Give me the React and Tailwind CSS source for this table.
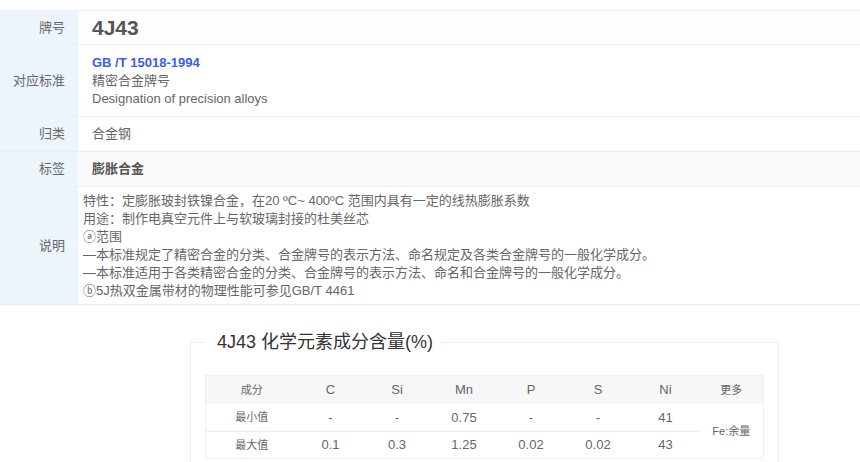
export default function App() {
  const font = { fontFamily: '"Liberation Sans", "Noto Sans CJK SC", sans-serif' };
  const cols = [92, 66, 67, 67, 67, 67, 68, 64];
  return (
    <div className="w-[860px] h-[462px] overflow-hidden bg-white text-[13px] text-[#666]" style={font}>
      <div className="mt-[10px] border-t border-[#eee]">
        <div className="flex h-[34px] border-b border-[#eee]">
          <div className="w-[78px] shrink-0 bg-[#edf5fc] flex items-center justify-end pr-[13px]">牌号</div>
          <div className="flex-1 flex items-center pl-[14px] bg-[#fefefe] text-[21px] font-bold text-[#555]">4J43</div>
        </div>
        <div className="flex h-[72px] border-b border-[#eee]">
          <div className="w-[78px] shrink-0 bg-[#edf5fc] flex items-center justify-end pr-[13px]">对应标准</div>
          <div className="flex-1 flex flex-col justify-center pl-[14px] leading-[18px]">
            <div className="font-bold text-[#3a5cf0]">GB /T 15018-1994</div>
            <div>精密合金牌号</div>
            <div>Designation of precision alloys</div>
          </div>
        </div>
        <div className="flex h-[35px] border-b border-[#eee]">
          <div className="w-[78px] shrink-0 bg-[#edf5fc] flex items-center justify-end pr-[13px]">归类</div>
          <div className="flex-1 flex items-center pl-[14px]">合金钢</div>
        </div>
        <div className="flex h-[35px] border-b border-[#eee]">
          <div className="w-[78px] shrink-0 bg-[#edf5fc] flex items-center justify-end pr-[13px]">标签</div>
          <div className="flex-1 flex items-center pl-[14px] bg-[#fafafa] font-bold text-[#555]">膨胀合金</div>
        </div>
        <div className="flex h-[118px] border-b border-[#eee]">
          <div className="w-[78px] shrink-0 bg-[#edf5fc] flex items-center justify-end pr-[13px]">说明</div>
          <div className="flex-1 flex flex-col justify-center pl-[5px] leading-[18px]">
            <div>特性：定膨胀玻封铁镍合金，在20 ºC~ 400ºC 范围内具有一定的线热膨胀系数</div>
            <div>用途：制作电真空元件上与软玻璃封接的杜美丝芯</div>
            <div>ⓐ范围</div>
            <div>—本标准规定了精密合金的分类、合金牌号的表示方法、命名规定及各类合金牌号的一般化学成分。</div>
            <div>—本标准适用于各类精密合金的分类、合金牌号的表示方法、命名和合金牌号的一般化学成分。</div>
            <div>ⓑ5J热双金属带材的物理性能可参见GB/T 4461</div>
          </div>
        </div>
      </div>
      <fieldset className="ml-[190px] mt-[25px] w-[588px] border border-[#eee] px-[14px] pt-[21px] pb-[20px]">
        <legend className="ml-0 pl-3 pr-2 text-[18px] leading-[24px] text-[#333]">4J43 化学元素成分含量(%)</legend>
        <table className="w-[558px] table-fixed border-collapse text-center border border-[#f0f0f0]">
          <colgroup>
            {cols.map((w, i) => (
              <col key={i} style={{ width: w }} />
            ))}
          </colgroup>
          <thead>
            <tr className="h-[28px] bg-[#f7f7f7]">
              <th className="font-normal text-[11px]">成分</th>
              <th className="font-normal">C</th>
              <th className="font-normal">Si</th>
              <th className="font-normal">Mn</th>
              <th className="font-normal">P</th>
              <th className="font-normal">S</th>
              <th className="font-normal">Ni</th>
              <th className="font-normal text-[11px]">更多</th>
            </tr>
          </thead>
          <tbody>
            <tr className="h-[28px] border-b border-[#eee]">
              <td className="text-[11px]">最小值</td>
              <td>-</td>
              <td>-</td>
              <td>0.75</td>
              <td>-</td>
              <td>-</td>
              <td>41</td>
              <td rowSpan={2} className="text-[11px] bg-white">Fe:余量</td>
            </tr>
            <tr className="h-[27px]">
              <td className="text-[11px]">最大值</td>
              <td>0.1</td>
              <td>0.3</td>
              <td>1.25</td>
              <td>0.02</td>
              <td>0.02</td>
              <td>43</td>
            </tr>
          </tbody>
        </table>
      </fieldset>
    </div>
  );
}
